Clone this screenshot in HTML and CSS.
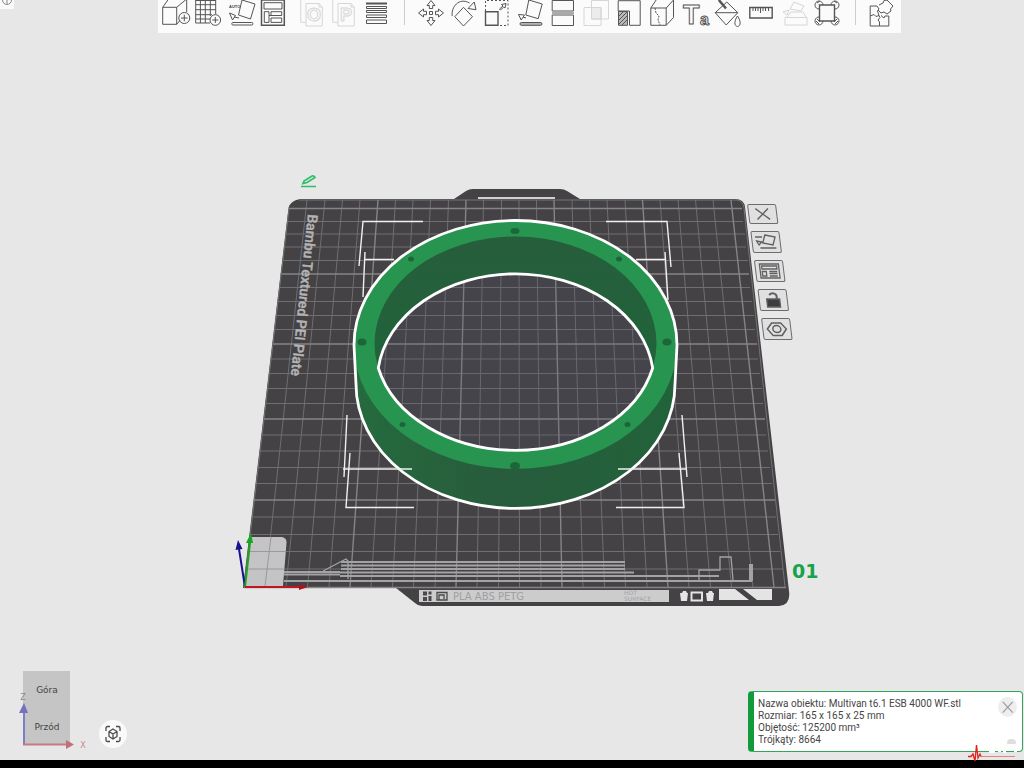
FILE: index.html
```html
<!DOCTYPE html>
<html lang="pl">
<head>
<meta charset="utf-8">
<meta name="viewport" content="width=device-width, initial-scale=1">
<title>Multivan t6.1 ESB 4000 WF</title>
<link rel="stylesheet" href="styles.css">
</head>
<body>
<main class="viewport">
  <svg class="scene" viewBox="0 0 1024 760" preserveAspectRatio="xMidYMid slice" role="img" aria-label="Płyta 01">
    <defs>
      <linearGradient id="inner" x1="0" y1="0" x2="0" y2="1">
        <stop offset="0" stop-color="#275d3c"/><stop offset="1" stop-color="#20643a"/>
      </linearGradient>
      <linearGradient id="side" x1="0" y1="0" x2="1" y2="0">
        <stop offset="0" stop-color="#256b3d"/><stop offset=".45" stop-color="#275b3c"/><stop offset="1" stop-color="#22633a"/>
      </linearGradient>
      <clipPath id="hole"><ellipse cx="515.5" cy="343.5" rx="141" ry="107"/></clipPath>
    </defs>

    <!-- plate -->
    <path class="plate" d="M300 199H454L466 191Q469 189 473 189H560Q564 189 567 191L580 199H735Q744 199 745 207L789 591Q791 605 779 606H422Q418 606 415 603L396 588H243L288.500 208Q290 201 300 199Z"/>
    <path class="plate-edge" d="M299 200H737Q743 201 744 208L785 587M289 209L244 587"/>
    <path class="slot" d="M478 198H555"/>

    <!-- 10 mm grid -->
    <path class="grid" d="M307 200L265 587M325 200L286 587M342.500 200L307.500 587M360 200L329 587M395.500 200L371 587M413 200L392.500 587M430.500 200L413.500 587M448.500 200L435 587M483.500 200L477 587M501.500 200L498.500 587M519 200L519.500 587M536.500 200L541 587M572 200L583 587M589.500 200L604.500 587M607 200L625.500 587M625 200L647 587M660 200L689 587M678 200L710.500 587M695.500 200L731.500 587M713 200L753 587"/>
    <path class="grid" d="M287 221.500H743M286 234H745M284 247H746M283 260.500H748M280 287.500H750M278 301.500H752M276 315.500H754M275 329.500H755M271 359H758M269 373.500H760M267 388.500H762M266 403.500H763M262 435H766M260 451H768M258 467.500H770M256 483.500H772M252 517H776M250 534.500H778M248 551.500H780M246 569H783"/>
    <path class="grid-major" d="M378 200L350 587M466 200L456 587M554 200L562 587M642.500 200L668 587M731 200L774 587M288 208.500H742M282 274H749M273 344H757M264 419H765M254 500H775M244 587.500H786"/>

    <!-- plate print -->
    <text class="plate-name" transform="translate(308 214) rotate(96)">Bambu Textured PEI Plate</text>
    <path class="pad" d="M251 537H282Q287 538 286.500 543L283 586H245Z"/>
    <path class="pad-grid" d="M271 537L265 586M249 551.500H286M247 569H284"/>
    <g class="print">
      <path d="M341 562H625M341 565.500H625M341 569H625M340 572.500H634M340 576H719M284 572H340M284 574.500H340M284 581H752"/>
      <path class="print-thin" d="M323 571L346 559L348 561V579M699 580V570H720V557H731L733 580"/>
      <path class="print-thick" d="M751 564V581"/>
    </g>
    <path class="label-strip" d="M419 590H669V602H419Z"/>
    <path class="ink" d="M423 591.500h4v4h-4zM428.500 591.500h3v3h-3zM423 597h4v4h-4zM428.500 596h3v5h-3z"/>
    <path class="ink-line" d="M437 592.500H447V600H437ZM439 600V595H444V599"/>
    <text class="strip-text" x="453" y="600">PLA ABS PETG</text>
    <text class="strip-note" x="624" y="595">HOT</text>
    <text class="strip-note" x="624" y="601">SURFACE</text>
    <path class="white" d="M680 593h2l1-2h3l1 2h1l-1 8h-6zM706 593h2l1-2h3l1 2h1l-1 8h-6zM719 589H735L749 600H719ZM743 589H772V600H757Z"/>
    <path class="white-line" d="M691.500 592.500H702V600.500H691.500Z"/>

    <!-- ring -->
    <path class="inner-floor" d="M378.300 368A138.200 107 0 0 1 652.700 368A141 107 0 0 1 378.300 368Z"/>
    <path class="ring-side" d="M354 345A161.500 124 0 0 1 677 345L674.500 384A159 124.500 0 0 1 356.500 384ZM378.300 368A141 107 0 0 0 652.700 368A138.200 107 0 0 0 378.300 368Z"/>
    <path class="ring-wall" clip-path="url(#hole)" d="M370 230H660V368H652.700A138.200 107 0 0 0 378.300 368H370Z"/>
    <path class="ring-top" d="M354 345A161.500 124 0 0 1 677 345A161.500 124 0 0 1 354 345ZM374.500 343.500A141 107 0 0 0 656.500 343.500A141 107 0 0 0 374.500 343.500Z"/>
    <path class="outline" d="M354 345A161.500 124.500 0 0 1 677 345L675 384A159.500 124.500 0 0 1 356 384Z"/>
    <path class="outline" d="M378.300 368A138.200 107 0 0 1 652.700 368A141 107 0 0 1 378.300 368Z"/>
    <g class="bore">
      <ellipse cx="515" cy="231" rx="4.500" ry="3"/><ellipse cx="411" cy="259" rx="3" ry="2.500"/>
      <ellipse cx="619" cy="259" rx="3" ry="2.500"/><ellipse cx="362" cy="342" rx="4.500" ry="3.500"/>
      <ellipse cx="667" cy="342" rx="4.500" ry="3.500"/><ellipse cx="402.500" cy="424.500" rx="3" ry="2.500"/>
      <ellipse cx="627.500" cy="424.500" rx="3" ry="2.500"/><ellipse cx="515" cy="466" rx="5" ry="4"/>
    </g>

    <!-- selection brackets -->
    <path class="bracket" d="M423 221.500H363L359 266M394 259.500H365M365 252L363 297M606 221.500H667L671 267M636 259.500H665M665 252L668 300M347 415L344 477M343 469H412M350 453L346 507.500H414M682 415L687 477M618 469H686M679 453L684 507.500H616"/>

    <!-- origin axes -->
    <path class="axis-z" d="M245 587L239 549"/><path class="fill-z" d="M235.500 550L238 540L242.500 549Z"/>
    <path class="axis-y" d="M245 587L250 543"/><path class="fill-y" d="M246 543L251 533L253 543Z"/>
    <path class="axis-x" d="M245 587H301"/><path class="fill-x" d="M299 584L308 587L299 590Z"/>
    <text class="plate-number" x="792" y="578">01</text>
  </svg>

  <button class="corner" aria-label="Informacje"><svg viewBox="0 0 14 9"><circle cx="7" cy="0" r="4.500"/><path d="M7 -2V4"/></svg></button>

  <header class="top">
    <nav class="toolbar" aria-label="Narzędzia">
      <div class="group">
        <button class="tool" aria-label="Dodaj"><svg viewBox="0 0 32 32"><path d="M2.700 7.300H16.700V24.300H2.700ZM2.700 7.300L8.500-1H26.700L16.700 7.300M16.700 24.300L20 20.500M26.700-1V12"/><circle cx="24.300" cy="18" r="5.500"/><path d="M21 18H27.600M24.300 14.700V21.300"/></svg></button>
        <button class="tool" aria-label="Dodaj płytę"><svg viewBox="0 0 32 32"><path d="M3.700-1V23H18M8.400-1V23M13.300-1V23M18.300-1V16M23.700-1V14M3.700.500H24M3.700 4.700H24M3.700 9.700H24M3.700 14.700H20M3.700 19H18"/><circle cx="23.300" cy="20" r="5.300"/><path d="M20.300 20H26.300M23.300 17V23"/></svg></button>
        <button class="tool" aria-label="Auto orientacja"><svg viewBox="0 0 32 32"><text class="auto" x="5" y="8">AUTO</text><path d="M18 0L31 4L26.500 19L14.500 15ZM5.500 13L11.500 15.500L8.500 20ZM10 17L15 18"/><rect x="7.800" y="22.500" width="21" height="2.500" rx="1"/></svg></button>
        <button class="tool" aria-label="Rozmieść"><svg viewBox="0 0 32 32"><path stroke-width="1.500" d="M5.500 0H28.300V25.300H5.500Z"/><path d="M8 2.700H26V9H8ZM8.300 11.700H13V22.400H8.300ZM15 11.700H25.700V15.500H15ZM15 18H25.700V22.400H15ZM13 15.500H15"/></svg></button>
      </div>
      <div class="group">
        <button class="tool" aria-label="Obiekty" disabled><svg viewBox="0 0 32 32"><path d="M11 3.500H24L27.300 7V26H11ZM5.700-1V22.300H11M24 3.500V7H27"/><text class="sheet" x="19" y="21">O</text></svg></button>
        <button class="tool" aria-label="Części" disabled><svg viewBox="0 0 32 32"><path d="M11 3.500H24L27.300 7V26H11ZM5.700-1V22.300H11M24 3.500V7H27"/><text class="sheet" x="19" y="21">P</text></svg></button>
        <button class="tool" aria-label="Wysokość warstwy"><svg viewBox="0 0 32 32"><path stroke-width="2" d="M7 3.500H28"/><path d="M7.500 6.500H27.500V8.500H7.500ZM7.500 10.500H27.500V12.500H7.500ZM7.500 15H27.500V17.500H7.500ZM7.500 20H27.500V23.500H7.500Z"/></svg></button>
      </div>
      <span class="divider"></span>
      <div class="group wide">
        <button class="tool" aria-label="Przesuń"><svg viewBox="0 0 32 32"><path d="M14.500 11.500H17.500V14.500H14.500ZM20.500 11.300H23.500V9L28.500 13L23.500 17V14.700H20.500ZM11.500 11.300H8.500V9L3.500 13L8.500 17V14.700H11.500ZM14.300 8.500V5.500H12L16 .500L20 5.500H17.700V8.500ZM14.300 17.500V20.500H12L16 25.500L20 20.500H17.700V17.500Z"/></svg></button>
        <button class="tool" aria-label="Obróć"><svg viewBox="0 0 32 32"><path d="M15.500 7.300L24.500 16.700L15.500 26L6.800 16.700ZM4.200 16C3 7 11-3 21.500 3M20 8.500L28 9.700L26.200 2Z"/></svg></button>
        <button class="tool" aria-label="Skaluj"><svg viewBox="0 0 32 32"><path stroke-dasharray="2 2" d="M4.500 11V.500H27V25.500H17"/><path stroke-width="1.400" d="M4.500 11.700H17V25.300H4.500Z"/><path d="M18.500 9L22 6L20.500 4.500L25 3.500L24 8L22.800 7L19.500 10Z"/></svg></button>
        <button class="tool" aria-label="Połóż na powierzchni"><svg viewBox="0 0 32 32"><path d="M14.800 0L28.200 4L24.200 18.700L11.800 15ZM4.500 14.500L10.500 15L7.200 20ZM9 17L12 18"/><rect class="bar" x="6" y="22.500" width="22" height="2.800" rx="1.400"/></svg></button>
        <button class="tool" aria-label="Tnij"><svg viewBox="0 0 32 32"><path d="M5.200.500H26.500V11H5.200ZM5.200 15H26.500V25.500H5.200Z"/><path class="soft" d="M5 13H27"/></svg></button>
        <button class="tool" aria-label="Operacje logiczne" disabled><svg viewBox="0 0 32 32"><path class="tint" d="M11.500 7.500H21V19H11.500Z"/><path d="M11.500.500H28.500V19H11.500ZM4 7.500H21V25.500H4Z"/></svg></button>
        <button class="tool" aria-label="Podpory"><svg viewBox="0 0 32 32"><path d="M5.200.700H27.200V25.300H16.500V11H5.200Z"/><path class="hatch" d="M5.500 11.500H14.500V25.300H5.500Z"/><path d="M6 16L10 12M6 20L14 12M6 24L14 16M9 25L14 20"/></svg></button>
        <button class="tool" aria-label="Szew"><svg viewBox="0 0 32 32"><path d="M4.800 8H20.200V25.300H4.800ZM4.800 8L10.800-1M20.200 8L27.500 0V17.500L20.200 25.300"/><path stroke-dasharray="2 1" d="M9 8L10 13L13 16L12 20L14 25"/></svg></button>
        <button class="tool" aria-label="Tekst"><svg viewBox="0 0 32 32"><text class="big-t" x="4" y="24">T</text><text class="small-a" x="21" y="25">a</text></svg></button>
        <button class="tool" aria-label="Malowanie"><svg viewBox="0 0 32 32"><path d="M3.200 12.700L14.800 2L25.800 12.700L14.200 25ZM3.200 12.700H25.800M25.500 16C22 21 22 26 25.500 26.500C29 26 29 21 25.500 16Z"/><path stroke-width="2.500" d="M6.800 0L14 8.500"/></svg></button>
        <button class="tool" aria-label="Miara"><svg viewBox="0 0 32 32"><path stroke-width="1.400" d="M4.800 7.500H27.200V18H4.800Z"/><path d="M8 8V11M10.500 8V11M13 8V11M15.500 8V13M18 8V11M20.500 8V11M23.500 8V11"/></svg></button>
        <button class="tool" aria-label="Złożenie" disabled><svg viewBox="0 0 32 32"><path d="M7 17.500H29V25H7ZM12 9L16 2L26 6L23 11ZM5 12L11 10L9 15ZM9 17L13 12H25L28 17"/></svg></button>
        <button class="tool" aria-label="Edycja siatki"><svg viewBox="0 0 32 32"><path stroke-width="1.400" d="M8.500 5H23.500V21H8.500Z"/><path d="M12 5A4 4 0 1 0 8.500 9M20 5A4 4 0 1 1 23.500 9M8.500 17A4 4 0 1 0 12 21M23.500 17A4 4 0 1 1 20 21M6 3L9 1M26 3L23 1M5 21L8 24M27 21L24 24M6 19L9 22M26 19L23 22"/></svg></button>
      </div>
      <span class="divider late"></span>
      <div class="group wide">
        <button class="tool" aria-label="Widok złożenia"><svg viewBox="0 0 32 32"><path d="M5.200 6H12L14 9L12.500 11L14 15.500L11 16.500L9 14.500L5.200 16ZM5.200 16V26H14.500V22L13 20L15 17.500L14 15.500M14.500 26H23.800V16H20L19 18L16 15.500M14 5L18 3L19 .500L22 0L28 6L25.500 9L26 11L22 14L19 12L16 13L13 10"/></svg></button>
      </div>
    </nav>
  </header>

  <button class="rename" aria-label="Zmień nazwę płyty"><svg viewBox="0 0 18 14"><path d="M3 9.500L4 7L12 2Q14 1.500 15 3.500L7 8.500ZM1 12.500H16"/></svg></button>

  <div class="plate-tools">
    <button aria-label="Usuń płytę"><svg viewBox="0 0 27 20"><path stroke-width="1.500" d="M6 4L21 16M20 4L7 16"/></svg></button>
    <button aria-label="Orientuj"><svg viewBox="0 0 27 20"><path d="M13 3L23 5L20 13L10 11ZM4 9L9 10L6 13ZM3 5H10M7 16H23"/></svg></button>
    <button aria-label="Rozmieść płytę"><svg viewBox="0 0 27 20"><path d="M4 3H23V17H4ZM6 5H21V8H6ZM6 10.500H10V15H6ZM13 10.500H21M13 12.500H21M13 15H21"/></svg></button>
    <button aria-label="Odblokuj"><svg viewBox="0 0 27 20"><path class="solid" d="M7 9H20V17H7Z"/><path stroke-width="2" d="M10 5Q13 2 16 4Q18 5 17 9"/></svg></button>
    <button aria-label="Ustawienia płyty"><svg viewBox="0 0 27 20"><path stroke-width="1.500" d="M9 4H18L23 10L18 16.500H9L4 10Z"/><ellipse cx="13.500" cy="10" rx="4" ry="3.500" stroke-width="1.500"/></svg></button>
  </div>

  <svg class="navigator" viewBox="0 0 80 84" role="img" aria-label="Góra, Przód">
    <path class="cube" d="M11 2H58V76H11Z"/>
    <text class="face" x="35" y="24">Góra</text>
    <text class="face" x="35" y="61">Przód</text>
    <path class="nav-z" d="M12 75V44"/><path class="nav-z-tip" d="M7 44L12 34L16 44Z"/>
    <path class="nav-x" d="M11 75.500H56"/><path class="nav-x-tip" d="M54 71L62 75.500L54 80Z"/>
    <text class="letter-z" x="11" y="31">Z</text><text class="letter-x" x="71" y="79">X</text>
  </svg>
  <button class="fit" aria-label="Dopasuj widok"><svg viewBox="0 0 28 28"><path d="M7 11V8Q7 6.500 8.500 6.500H11M17 6.500H19.500Q21 6.500 21 8V11M21 17V20Q21 21.500 19.500 21.500H17M11 21.500H8.500Q7 21.500 7 20V17M14 9L18 11.500V16.500L14 19L10 16.500V11.500ZM10 11.500L14 14L18 11.500M14 14V19"/></svg></button>

  <section class="info" aria-label="Obiekt">
    <p>Nazwa obiektu: Multivan t6.1 ESB 4000 WF.stl</p>
    <p>Rozmiar: 165 x 165 x 25 mm</p>
    <p>Objętość: 125200 mm³</p>
    <p>Trójkąty: 8664</p>
    <button class="close" aria-label="Zamknij"><svg viewBox="0 0 20 20"><path d="M5 4.500L15.500 16M15.500 4.500L5 16"/></svg></button>
    <span class="chip"></span>
  </section>
</main>
<footer class="edge"></footer>
<svg class="pulse" viewBox="0 0 52 20" aria-hidden="true"><path class="flat" d="M14 12.500H48"/><path class="beat" d="M1 12.500H4L6 10L8 17L9.500 1L11 14L13 10L14 12.500"/><path class="dash" d="M22 8H28M31 7H34M36 8H39M47 7H50"/></svg>
</body>
</html>
```
FILE: styles.css
```css
* { box-sizing: border-box; }
body {
  margin: 0;
  min-height: 100vh;
  display: flex;
  flex-direction: column;
  position: relative;
  overflow: hidden;
  background: #e8e7e8;
  font-family: Roboto, "Noto Sans", sans-serif;
}
button {
  margin: 0;
  padding: 0;
  border: 0;
  background: none;
  cursor: pointer;
}
svg { display: block; fill: none; }
.viewport { position: relative; flex: 1; }
.edge { height: 8px; background: #000; }

/* scene */
.scene { position: absolute; width: 100%; height: 100%; }
.plate { fill: #444244; }
.plate-edge { stroke: #737274; stroke-width: 1; }
.slot { stroke: #d0d0d0; stroke-width: 2; }
.grid { stroke: #6f6e70; stroke-width: 1; }
.grid-major { stroke: #858486; stroke-width: 1.4; }
.plate-name { fill: #b4b3b5; stroke: #b4b3b5; stroke-width: .4; font: 500 14px Roboto, sans-serif; }
.pad { fill: #c4c3c5; }
.pad-grid { stroke: #99989a; }
.print { stroke: #a3a2a4; stroke-width: 2; }
.print-thin { stroke-width: 1.3; }
.print-thick { stroke-width: 4; }
.label-strip { fill: #cdcccd; }
.ink { fill: #4b494b; }
.ink-line { stroke: #4b494b; stroke-width: 1.3; }
.strip-text { fill: #a09fa1; font: 10px "DejaVu Sans", sans-serif; }
.strip-note { fill: #a3a2a4; font: 6px "DejaVu Sans", sans-serif; }
.white { fill: #e5e4e5; }
.white-line { stroke: #e5e4e5; stroke-width: 2; }
.inner-floor { fill: #46506a; fill-opacity: .16; }
.ring-side { fill: url(#side); fill-rule: evenodd; }
.ring-wall { fill: url(#inner); }
.ring-top { fill: #279450; fill-rule: evenodd; }
.outline { stroke: #fff; stroke-width: 2.8; stroke-linejoin: round; }
.bore { fill: #1d663a; }
.bracket { stroke: #f0f0f0; stroke-width: 1.4; }
.axis-z { stroke: #17128f; stroke-width: 2; }
.fill-z { fill: #17128f; }
.axis-y { stroke: #1aa51e; stroke-width: 2; }
.fill-y { fill: #1aa51e; }
.axis-x { stroke: #c11622; stroke-width: 2; }
.fill-x { fill: #a9151f; }
.plate-number { fill: #17a34d; font: bold 19px "DejaVu Sans", sans-serif; }

/* toolbar */
.top {
  position: absolute;
  top: 0;
  left: 0;
  right: 0;
  display: flex;
  justify-content: center;
  padding-left: 35px;
  pointer-events: none;
}
.toolbar {
  display: flex;
  align-items: flex-start;
  height: 33px;
  padding: 0 3px 0 2px;
  background: #fbfbfb;
  pointer-events: auto;
}
.group { display: flex; }
.group + .group { margin-left: 7px; }
.tool { width: 32px; height: 32px; }
.wide .tool { width: 33px; }
.tool svg { width: 32px; height: 32px; stroke: #555; stroke-width: 1; }
.tool:disabled svg { stroke: #d6d6d6; }
.tool text { fill: #fbfbfb; font-family: "Liberation Sans", Arial, sans-serif; }
.tool .auto { fill: #444; stroke: none; font-size: 4px; font-weight: bold; }
.tool .sheet { font-size: 18px; font-weight: bold; text-anchor: middle; }
.tool .big-t { font-size: 27px; font-weight: bold; }
.tool .small-a { font-size: 16px; font-weight: bold; }
.bar { fill: #b5b5b5; }
.soft { stroke: #aaa; stroke-width: 2; }
.tint { fill: #ececec; }
.hatch { fill: #b8b8b8; }
.divider { width: 1px; height: 25px; margin: 0 10px 0 13px; background: #ccc; }
.late { margin: 0 9px 0 11px; }
.corner { position: absolute; top: 0; left: 0; width: 14px; height: 9px; background: #fafafa; }
.corner svg { width: 14px; height: 9px; stroke: #888; }

/* controls that sit beside the plate */
.rename { position: absolute; left: 29.300%; top: 22.900%; }
.rename svg { width: 18px; height: 14px; stroke: #2fbd69; stroke-width: 1.7; }
.plate-tools {
  position: absolute;
  left: 72.950%;
  top: 26.900%;
  display: flex;
  flex-direction: column;
  gap: 6px;
  transform: skewX(7deg);
  transform-origin: 0 0;
}
.plate-tools button {
  width: 29px;
  height: 22px;
  border: 1px solid #6c6b6d;
  border-radius: 2px;
  background: #e1e0e1;
}
.plate-tools button:first-child { height: 20px; }
.plate-tools button + button { margin-top: 1px; }
.plate-tools svg { width: 100%; height: 100%; stroke: #605f61; stroke-width: 1.3; }
.solid { fill: #3d3c3e; }

/* view navigator */
.navigator { position: absolute; left: 12px; bottom: 7px; width: 80px; height: 84px; }
.cube { fill: #c5c5c5; }
.face { fill: #444; text-anchor: middle; font: 9px "DejaVu Sans", sans-serif; }
.nav-z { stroke: #7f7dc4; stroke-width: 2; }
.nav-z-tip { fill: #7471bd; }
.nav-x { stroke: #c67b84; stroke-width: 2; }
.nav-x-tip { fill: #c16f79; }
.letter-z { fill: #898989; text-anchor: middle; font: 8px "DejaVu Sans", sans-serif; }
.letter-x { fill: #c78a91; text-anchor: middle; font: 8px "DejaVu Sans", sans-serif; }
.fit {
  position: absolute;
  left: 99px;
  bottom: 12px;
  width: 28px;
  height: 28px;
  border-radius: 50%;
  background: #fafafa;
}
.fit svg { width: 28px; height: 28px; stroke: #4b4b4b; stroke-width: 1.3; }

/* object info */
.info {
  position: absolute;
  right: 1px;
  bottom: 8px;
  width: 275px;
  padding: 6px 28px 5px 4px;
  border: 1px solid #35a35b;
  border-left: 6px solid #129b3a;
  border-radius: 4px;
  background: #fff;
  color: #454545;
  font-size: 10px;
  line-height: 12px;
}
.info p { margin: 0; white-space: nowrap; }
.close {
  position: absolute;
  top: 5px;
  right: 5px;
  width: 19px;
  height: 20px;
  border-radius: 50%;
  background: #eee;
}
.close svg { width: 19px; height: 20px; stroke: #999; stroke-width: 1.2; }
.chip {
  position: absolute;
  right: 6px;
  bottom: 7px;
  width: 9px;
  height: 5px;
  border-radius: 4px 4px 1px 1px;
  background: #dedede;
}
.pulse { position: absolute; right: 5px; bottom: 4px; width: 52px; height: 20px; pointer-events: none; }
.flat { stroke: #e0867f; }
.beat { stroke: #e32118; stroke-width: 1.3; }
.dash { stroke: #fff; stroke-width: 2; }
```
